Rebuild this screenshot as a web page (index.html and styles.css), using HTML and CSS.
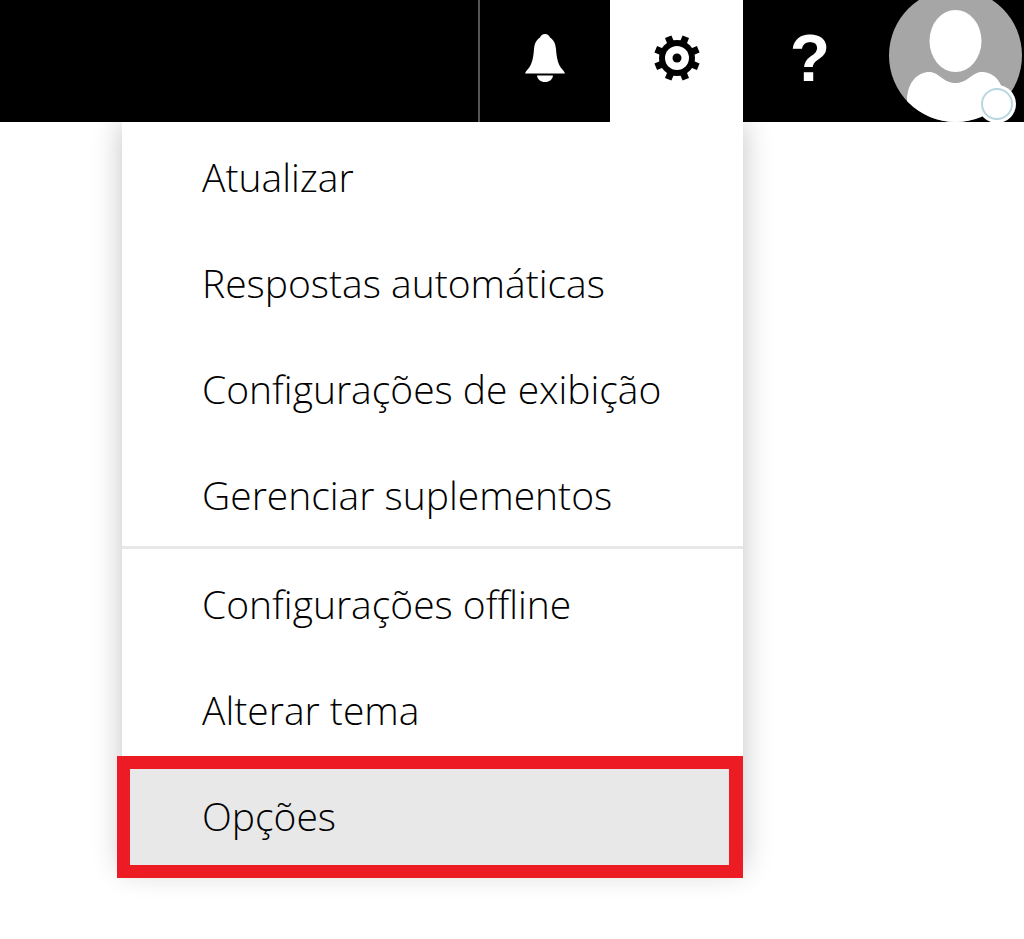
FILE: index.html
```html
<!DOCTYPE html>
<html lang="pt">
<head>
<meta charset="utf-8">
<title>Configurações</title>
<link rel="stylesheet" href="styles.css">
</head>
<body>
<header class="topbar">
  <div class="tool tool-bell">
    <svg class="bell" width="40" height="48" viewBox="0 0 40 48" aria-hidden="true">
      <path d="M20 0C22.5 0 24 1.5 25 3.5C29 6 30.5 10 31 15C31.500 23 33 31 37 35C38.500 36.500 39.500 38 40 39.500L0 39.500C.5 38 1.500 36.500 3 35C7 31 8.500 23 9 15C9.500 10 11 6 15 3.500C16 1.500 17.500 0 20 0Z"/>
      <path d="M12 41.500H28C27.500 45.500 24.500 48 20 48C15.500 48 12.500 45.500 12 41.500Z"/>
    </svg>
  </div>
  <div class="tool tool-active">
    <svg width="48" height="48" viewBox="-24 -24 48 48" aria-hidden="true">
      <circle r="18"/>
      <g class="teeth">
        <rect x="-3.500" y="-23" width="7" height="9" transform="rotate(22.500)"/>
        <rect x="-3.500" y="-23" width="7" height="9" transform="rotate(67.500)"/>
        <rect x="-3.500" y="-23" width="7" height="9" transform="rotate(112.500)"/>
        <rect x="-3.500" y="-23" width="7" height="9" transform="rotate(157.500)"/>
        <rect x="-3.500" y="-23" width="7" height="9" transform="rotate(202.500)"/>
        <rect x="-3.500" y="-23" width="7" height="9" transform="rotate(247.500)"/>
        <rect x="-3.500" y="-23" width="7" height="9" transform="rotate(292.500)"/>
        <rect x="-3.500" y="-23" width="7" height="9" transform="rotate(337.500)"/>
      </g>
      <circle class="gear-ring" r="12"/>
      <circle r="4.500"/>
    </svg>
  </div>
  <div class="tool tool-help">?</div>
  <div class="avatar-slot">
    <svg class="avatar" width="133" height="133" viewBox="0 0 133 133" aria-hidden="true">
      <defs>
        <clipPath id="avatar-clip"><circle cx="66.500" cy="66.500" r="66.500"/></clipPath>
      </defs>
      <circle class="av-bg" cx="66.500" cy="66.500" r="66.500"/>
      <ellipse class="av-fg" cx="66.500" cy="52" rx="26" ry="31"/>
      <path class="av-fg" clip-path="url(#avatar-clip)" d="M18 112C18 92 30 83 40 83C50 83 54 94 66.500 94C79 94 83 83 93 83C104 83 115 92 115 112L115 133L18 133Z"/>
      <circle class="av-fg" cx="108" cy="115" r="19"/>
      <circle class="av-ring" cx="108" cy="115" r="15"/>
    </svg>
  </div>
</header>
<nav class="menu">
  <ul class="group">
    <li class="item">Atualizar</li>
    <li class="item">Respostas automáticas</li>
    <li class="item">Configurações de exibição</li>
    <li class="item">Gerenciar suplementos</li>
  </ul>
  <ul class="group group-rule">
    <li class="item">Configurações offline</li>
    <li class="item">Alterar tema</li>
    <li class="item item-selected">Opções<span class="callout"></span></li>
  </ul>
</nav>
</body>
</html>
```
FILE: styles.css
```css
* { box-sizing: border-box; }
html, body { margin: 0; padding: 0; background: #fff; }
body {
  height: 939px;
  overflow: hidden;
  font-family: "Open Sans", "Noto Sans", "Liberation Sans", sans-serif;
}
.topbar {
  position: relative;
  z-index: 2;
  height: 122px;
  background: #000;
  display: flex;
  justify-content: flex-end;
  overflow: hidden;
  padding-right: 2px;
}
.tool {
  width: 133px;
  display: flex;
  justify-content: center;
  padding-top: 34px;
  color: #fff;
}
.tool svg { display: block; }
.tool-bell {
  width: 132px;
  border-left: 2px solid #555;
}
.bell { fill: #fff; }
.tool-active { background: #fff; }
.tool-help {
  width: 146px;
  padding: 0 12px 0 0;
  font-family: "Liberation Sans", Arial, sans-serif;
  font-weight: 700;
  font-size: 66px;
  line-height: 116px;
}
.avatar-slot { width: 133px; margin-top: -11px; }
.avatar { display: block; }
.av-bg { fill: #a6a6a6; }
.av-fg { fill: #fff; }
.av-ring { fill: none; stroke: #b9d5e0; stroke-width: 2px; }
.gear-ring { fill: #fff; }
.menu {
  margin-left: 122px;
  width: 621px;
  height: 747px;
  background: #fff;
  box-shadow: 0 0 28px rgba(0, 0, 0, .24);
}
.group { list-style: none; margin: 0; padding: 0; }
.group-rule { border-top: 3px solid #e8e8e8; }
.item {
  height: 106px;
  padding: 6px 0 0 80px;
  font-size: 39px;
  font-weight: 350;
  line-height: 98px;
  color: #000;
  white-space: nowrap;
}
.item-selected { position: relative; background: #e8e8e8; }
.callout {
  position: absolute;
  left: -5px;
  right: 0;
  top: -5px;
  height: 122px;
  border: 13px solid #ed1c24;
  border-right-width: 14px;
}
```
